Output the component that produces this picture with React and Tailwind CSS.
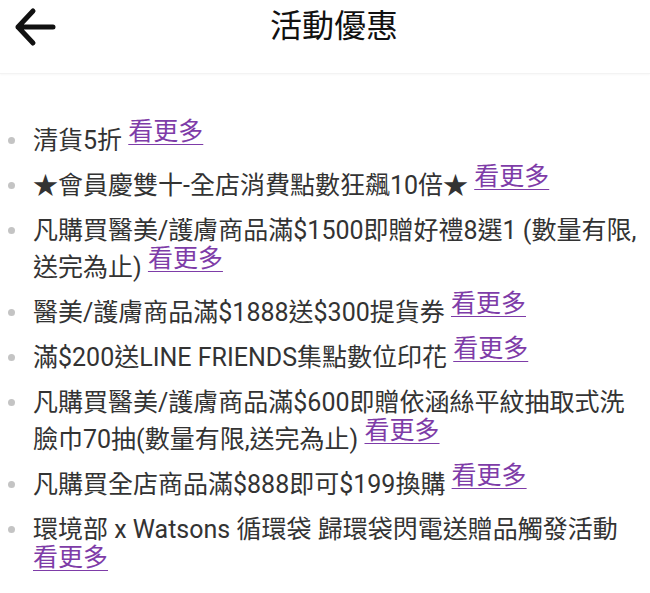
import React from 'react'

const items = [
  '清貨5折',
  '★會員慶雙十-全店消費點數狂飆10倍★',
  '凡購買醫美/護膚商品滿$1500即贈好禮8選1 (數量有限,送完為止)',
  '醫美/護膚商品滿$1888送$300提貨券',
  '滿$200送LINE FRIENDS集點數位印花',
  '凡購買醫美/護膚商品滿$600即贈依涵絲平紋抽取式洗臉巾70抽(數量有限,送完為止)',
  '凡購買全店商品滿$888即可$199換購',
  '環境部 x Watsons 循環袋 歸環袋閃電送贈品觸發活動',
]

export default function App() {
  return (
    <div
      className="w-[650px] h-[593px] bg-white overflow-hidden"
      style={{ fontFamily: 'Roboto, "Noto Sans CJK TC", sans-serif' }}
    >
      {/* header */}
      <div className="relative h-[74px] flex items-start justify-center pl-[18px] border-b border-[#f3f3f3] shadow-[0_1px_2px_rgba(0,0,0,0.03)]">
        <button className="absolute left-0 top-0 w-[70px] h-[60px]">
          <svg width="70" height="60" viewBox="0 0 70 60" fill="none">
            <path
              d="M18 27H53M33 11L18 27L33 43"
              stroke="#111"
              strokeWidth="5"
              strokeLinecap="round"
              strokeLinejoin="round"
            />
          </svg>
        </button>
        <h1 className="text-[32px] leading-[52px] text-[#111]">活動優惠</h1>
      </div>

      {/* list */}
      <ul className="pt-[48px] flex flex-col gap-[8px]">
        {items.map((text, i) => (
          <li key={i} className="flex items-start">
            <span className="shrink-0 mt-[15px] ml-[8px] w-[7px] h-[7px] rounded-full bg-[#c4c4c4]" />
            <p className="ml-[18px] pr-[8px] flex-1 text-[25px] leading-[37px] text-[#333]">
              {text}{' '}
              <a href="#" className="whitespace-nowrap text-[#7e3ca8] leading-[16px] underline underline-offset-[4px] decoration-[1px] align-[9px]">
                看更多
              </a>
            </p>
          </li>
        ))}
      </ul>
    </div>
  )
}
